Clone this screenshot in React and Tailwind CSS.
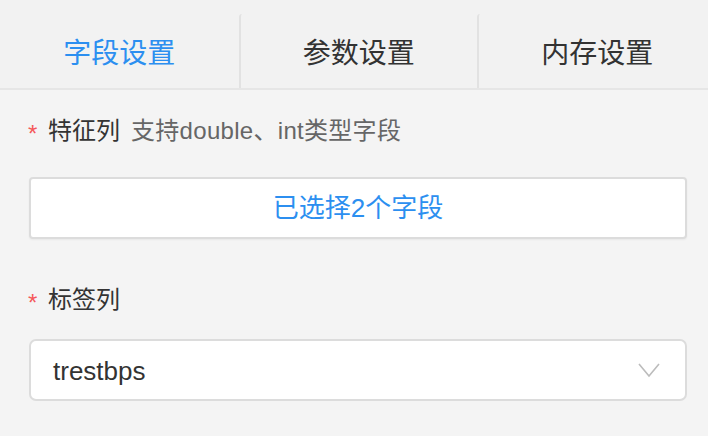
const tabs = ["字段设置", "参数设置", "内存设置"];

const Label = ({ children, hint }) => (
  <div className="flex items-center h-8 leading-8">
    <span className="text-[#f5585a] text-[24px] w-[20px] pt-[6px] ml-[-2px]">*</span>
    <span className="text-[#333] text-[24px]">{children}</span>
    {hint && (
      <span className="text-[#666] text-[24px] tracking-[0.3px] ml-[11px]">{hint}</span>
    )}
  </div>
);

export default function App() {
  return (
    <div
      className="w-[708px] h-[436px] bg-[#f4f4f4] overflow-hidden"
      style={{ fontFamily: '"Liberation Sans", "Noto Sans CJK SC", sans-serif' }}
    >
      <div className="flex items-end h-[90px] bg-[#f2f2f2] border-b-2 border-[#e6e6e6]">
        {tabs.map((t, i) => (
          <div
            key={t}
            className={
              "shrink-0 w-[238.5px] h-[74px] pt-[6px] flex items-center justify-center text-[28px] " +
              (i > 0 ? "border-l-2 border-[#e2e2e2] rounded-tl-[3px] " : "") +
              (i === 0 ? "text-[#2c8ff0]" : "text-[#333]")
            }
          >
            {t}
          </div>
        ))}
      </div>

      <div className="pl-[29px] pr-[21px]">
        <div className="mt-[25px] pl-[1px]">
          <Label hint="支持double、int类型字段">特征列</Label>
        </div>
        <div className="mt-[30px] h-[62px] bg-white border-2 border-[#dcdcdc] rounded-[4px] flex items-center justify-center text-[#2c8ff0] text-[26px] shadow-[0_1px_2px_rgba(0,0,0,0.05)]">
          已选择2个字段
        </div>

        <div className="mt-[45px] pl-[1px]">
          <Label>标签列</Label>
        </div>
        <div className="mt-[23px] h-[62px] bg-white border-2 border-[#dcdcdc] rounded-[7px] flex items-center justify-between pl-[22px] pr-[24px]">
          <span className="text-[#333] text-[26px] pt-[3px]">trestbps</span>
          <svg width="24" height="16" viewBox="0 0 24 16" fill="none">
            <path d="M2 2 L12 14 L22 2" stroke="#bcbcbc" strokeWidth="1.6" />
          </svg>
        </div>
      </div>
    </div>
  );
}
